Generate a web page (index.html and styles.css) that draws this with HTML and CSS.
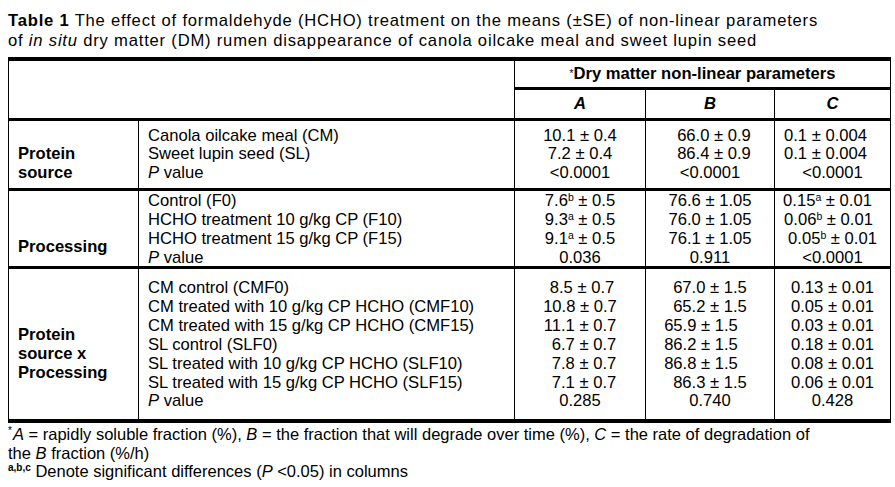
FILE: index.html
```html
<!DOCTYPE html>
<html lang="en">
<head>
<meta charset="utf-8">
<title>Table 1</title>
<link rel="stylesheet" href="styles.css">
</head>
<body>
<div class="page">
  <p class="caption"><b>Table 1</b> The effect of formaldehyde (HCHO) treatment on the means (±SE) of non-linear parameters<br>of <i>in situ</i> dry matter (DM) rumen disappearance of canola oilcake meal and sweet lupin seed</p>

  <div class="tbl">
    <div class="corner"></div>
    <div class="grouphead"><span class="ast">*</span>Dry matter non-linear parameters</div>
    <div class="colhead ca"><i>A</i></div>
    <div class="colhead cb"><i>B</i></div>
    <div class="colhead cc"><i>C</i></div>

    <div class="label s1 r3"><div>Protein</div><div>source</div></div>
    <div class="items s1 r3">
      <div>Canola oilcake meal (CM)</div>
      <div>Sweet lupin seed (SL)</div>
      <div><i>P</i> value</div>
    </div>
    <div class="vals s1 r3 ca">
      <div>10.1 ± 0.4</div>
      <div>7.2 ± 0.4</div>
      <div>&lt;0.0001</div>
    </div>
    <div class="vals s1 r3 cb">
      <div class="nr4">66.0 ± 0.9</div>
      <div class="nr4">86.4 ± 0.9</div>
      <div>&lt;0.0001</div>
    </div>
    <div class="vals s1 r3 cc">
      <div class="nl7">0.1 ± 0.004</div>
      <div class="nl7">0.1 ± 0.004</div>
      <div>&lt;0.0001</div>
    </div>

    <div class="label s2 r4"><div>Processing</div></div>
    <div class="items s2 r4">
      <div>Control (F0)</div>
      <div>HCHO treatment 10 g/kg CP (F10)</div>
      <div>HCHO treatment 15 g/kg CP (F15)</div>
      <div><i>P</i> value</div>
    </div>
    <div class="vals s2 r4 ca">
      <div>7.6<sup>b</sup> ± 0.5</div>
      <div>9.3<sup>a</sup> ± 0.5</div>
      <div>9.1<sup>a</sup> ± 0.5</div>
      <div>0.036</div>
    </div>
    <div class="vals s2 r4 cb">
      <div>76.6 ± 1.05</div>
      <div>76.0 ± 1.05</div>
      <div>76.1 ± 1.05</div>
      <div>0.911</div>
    </div>
    <div class="vals s2 r4 cc">
      <div class="nl5">0.15<sup>a</sup> ± 0.01</div>
      <div class="nl4">0.06<sup>b</sup> ± 0.01</div>
      <div>0.05<sup>b</sup> ± 0.01</div>
      <div>&lt;0.0001</div>
    </div>

    <div class="label s3 r5"><div>Protein</div><div>source x</div><div>Processing</div></div>
    <div class="items s3 r5">
      <div>CM control (CMF0)</div>
      <div>CM treated with 10 g/kg CP HCHO (CMF10)</div>
      <div>CM treated with 15 g/kg CP HCHO (CMF15)</div>
      <div>SL control (SLF0)</div>
      <div>SL treated with 10 g/kg CP HCHO (SLF10)</div>
      <div>SL treated with 15 g/kg CP HCHO (SLF15)</div>
      <div><i>P</i> value</div>
    </div>
    <div class="vals s3 r5 ca">
      <div class="nr2">8.5 ± 0.7</div>
      <div>10.8 ± 0.7</div>
      <div>11.1 ± 0.7</div>
      <div class="nr4">6.7 ± 0.7</div>
      <div class="nr4">7.8 ± 0.7</div>
      <div class="nr4">7.1 ± 0.7</div>
      <div>0.285</div>
    </div>
    <div class="vals s3 r5 cb">
      <div>67.0 ± 1.5</div>
      <div>65.2 ± 1.5</div>
      <div class="nl9">65.9 ± 1.5</div>
      <div class="nl9">86.2 ± 1.5</div>
      <div class="nl9">86.8 ± 1.5</div>
      <div>86.3 ± 1.5</div>
      <div>0.740</div>
    </div>
    <div class="vals s3 r5 cc">
      <div>0.13 ± 0.01</div>
      <div>0.05 ± 0.01</div>
      <div>0.03 ± 0.01</div>
      <div>0.18 ± 0.01</div>
      <div>0.08 ± 0.01</div>
      <div>0.06 ± 0.01</div>
      <div>0.428</div>
    </div>
  </div>

  <div class="notes">
    <p><span class="ast">*</span><i>A</i> = rapidly soluble fraction (%), <i>B</i> = the fraction that will degrade over time (%), <i>C</i> = the rate of degradation of<br>the <i>B</i> fraction (%/h)</p>
    <p><sup class="abc">a,b,c</sup> Denote significant differences (<i>P</i> &lt;0.05) in columns</p>
  </div>
</div>
</body>
</html>
```

FILE: styles.css
```css
html, body {
  margin: 0;
  padding: 0;
  background: #ffffff;
}

body {
  padding: 8px;
  font-family: "Liberation Sans", Arial, sans-serif;
  font-size: 16.6px;
  color: #000;
}

.caption {
  margin: 3px 0 6px 0;
  line-height: 20px;
  letter-spacing: 0.8px;
  white-space: nowrap;
}

.tbl {
  display: grid;
  grid-template-columns: 129px 376px 131px 129px 116px;
  grid-template-rows: 26px 31px 70px 78px 153px;
  width: 883px;
  box-sizing: border-box;
  border-style: solid;
  border-color: #000;
  border-width: 4px 1px;
  line-height: 18.9px;
}

.corner {
  grid-column: 1 / 3;
  grid-row: 1 / 3;
}

.grouphead {
  grid-column: 3 / 6;
  grid-row: 1;
  border-left: 1px solid #000;
  display: flex;
  align-items: center;
  justify-content: center;
  font-weight: bold;
}

.ast {
  font-size: 10px;
  vertical-align: 5px;
  line-height: 0;
  font-weight: normal;
}

.colhead {
  grid-row: 2;
  border-left: 1px solid #000;
  border-top: 3px solid #000;
  display: flex;
  align-items: center;
  justify-content: center;
  font-weight: bold;
}

.ca { grid-column: 3; }
.cb { grid-column: 4; }
.cc { grid-column: 5; }

.r3 { grid-row: 3; }
.r4 { grid-row: 4; }
.r5 { grid-row: 5; }

.label,
.items,
.vals {
  border-top: 3px solid #000;
  box-sizing: border-box;
}

.label {
  grid-column: 1;
  font-weight: bold;
  padding-left: 9px;
}

.items {
  grid-column: 2;
  border-left: 1px solid #000;
  padding-left: 9px;
  white-space: nowrap;
}

.vals {
  border-left: 1px solid #000;
  text-align: center;
  white-space: nowrap;
}

.label.s1 { padding-top: 24px; }
.label.s2 { padding-top: 46.6px; }
.label.s3 { padding-top: 57px; }

.items.s1, .vals.s1 { padding-top: 5.5px; }
.items.s2, .vals.s2 { padding-top: 1px; }
.items.s3, .vals.s3 { padding-top: 10px; }

sup {
  font-size: 10.5px;
  line-height: 0;
  vertical-align: 5px;
}

/* small horizontal nudges seen in the source alignment */
.nr2 { padding-left: 4px; }
.nr4 { padding-left: 8px; }
.nl4 { padding-right: 8px; }
.nl5 { padding-right: 10px; }
.nl7 { padding-right: 14px; }
.nl9 { padding-right: 18px; }

.notes {
  margin-top: 2px;
  font-size: 16.5px;
  line-height: 18.7px;
}

.notes p {
  margin: 0;
  white-space: nowrap;
}

.notes .ast {
  vertical-align: 6px;
  margin-right: 1px;
}

.abc {
  font-weight: bold;
  font-size: 10px;
  vertical-align: 6px;
}
```
